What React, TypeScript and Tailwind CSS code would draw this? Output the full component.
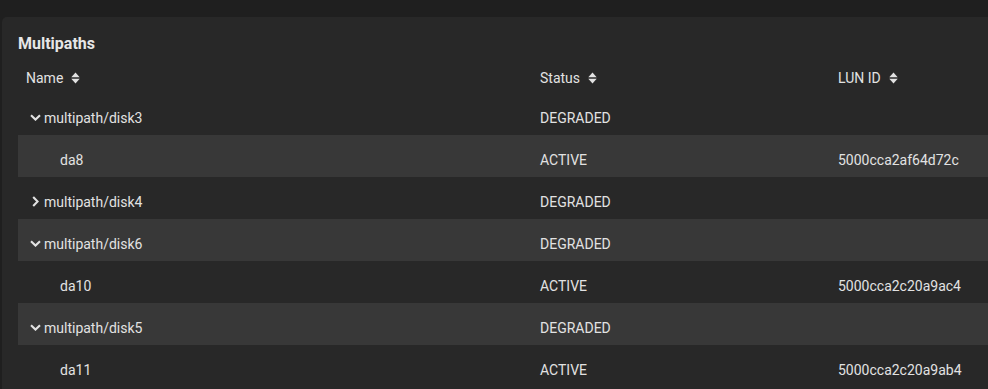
import React from "react";

interface PathRow {
  name: string;
  status: string;
  lunId?: string;
  kind: "open" | "closed" | "child";
}

const rows: PathRow[] = [
  { name: "multipath/disk3", status: "DEGRADED", kind: "open" },
  { name: "da8", status: "ACTIVE", lunId: "5000cca2af64d72c", kind: "child" },
  { name: "multipath/disk4", status: "DEGRADED", kind: "closed" },
  { name: "multipath/disk6", status: "DEGRADED", kind: "open" },
  { name: "da10", status: "ACTIVE", lunId: "5000cca2c20a9ac4", kind: "child" },
  { name: "multipath/disk5", status: "DEGRADED", kind: "open" },
  { name: "da11", status: "ACTIVE", lunId: "5000cca2c20a9ab4", kind: "child" },
];

function SortIcon() {
  return (
    <svg width="9" height="12" viewBox="0 0 9 12" className="ml-[8px] shrink-0">
      <path d="M0.3 5.2 L4.5 0.6 L8.7 5.2 Z" fill="#e2e2e2" />
      <path d="M0.3 6.8 L4.5 11.4 L8.7 6.8 Z" fill="#e2e2e2" />
    </svg>
  );
}

function Chevron({ open }: { open: boolean }) {
  return (
    <span className="w-[18px] flex items-center justify-center shrink-0">
      {open ? (
        <svg width="11" height="7" viewBox="0 0 11 7">
          <path d="M1 1.2 L5.5 5.6 L10 1.2" fill="none" stroke="#e2e2e2" strokeWidth="2.1" />
        </svg>
      ) : (
        <svg width="7" height="11" viewBox="0 0 7 11">
          <path d="M1.2 1 L5.6 5.5 L1.2 10" fill="none" stroke="#e2e2e2" strokeWidth="2.1" />
        </svg>
      )}
    </span>
  );
}

export default function App() {
  return (
    <div
      className="w-[988px] h-[389px] overflow-hidden bg-[#1f1f1f] pl-[2px] pt-[17px] text-[#e2e2e2]"
      style={{ fontFamily: "Roboto, 'Liberation Sans', sans-serif" }}
    >
      <div className="w-[1020px] h-[420px] rounded-[5px] bg-[#282828] px-4 pt-4">
        <h2 className="h-[22px] text-[16px] leading-[22px] font-bold text-[#e6e6e6]">Multipaths</h2>

        {/* header */}
        <div className="h-[38px] flex items-end pb-[5px] pl-2 text-[14px] leading-5">
          <div className="w-[514px] flex items-center">
            Name <SortIcon />
          </div>
          <div className="w-[298px] flex items-center">
            Status <SortIcon />
          </div>
          <div className="flex-1 flex items-center">
            LUN ID <SortIcon />
          </div>
        </div>

        {rows.map((row, i) => (
          <div
            key={row.name}
            className={`h-[42px] flex items-center pt-[7px] pl-2 text-[14px] leading-5 ${
              i % 2 === 1 ? "bg-[#383838]" : ""
            }`}
          >
            <div className="w-[514px] flex items-center">
              {row.kind === "child" ? (
                <span className="pl-[34px]">{row.name}</span>
              ) : (
                <>
                  <Chevron open={row.kind === "open"} />
                  <span>{row.name}</span>
                </>
              )}
            </div>
            <div className="w-[298px]">{row.status}</div>
            <div className="flex-1">{row.lunId}</div>
          </div>
        ))}
      </div>
    </div>
  );
}
